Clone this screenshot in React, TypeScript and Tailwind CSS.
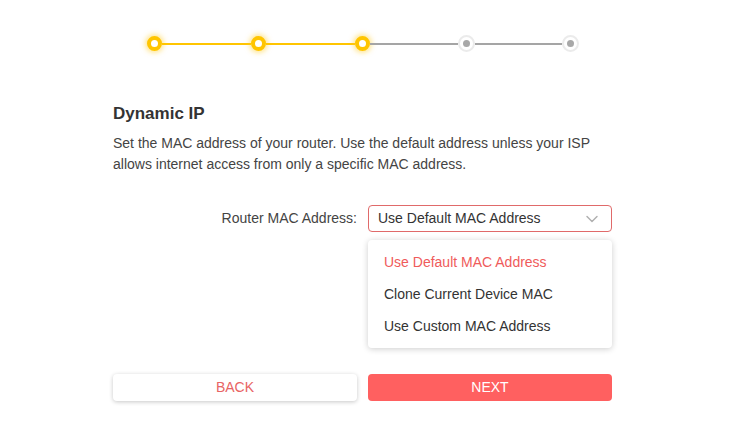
import { ChevronDown } from "lucide-react";

const steps = [true, true, true, false, false];

function StepDot({ done }: { done: boolean }) {
  if (done) {
    return (
      <div className="w-[15px] h-[15px] rounded-full border-[4px] border-[#ffc500] bg-white shadow-[0_0_5px_2px_rgba(255,205,40,0.5)] shrink-0" />
    );
  }
  return (
    <div className="w-[17px] h-[17px] rounded-full border-[2px] border-[#ebebeb] bg-white flex items-center justify-center shrink-0">
      <div className="w-[7px] h-[7px] rounded-full bg-[#a8a8a8]" />
    </div>
  );
}

function Stepper() {
  return (
    <div className="flex items-center ml-[147px] w-[432px] h-[17px]">
      {steps.map((done, i) => (
        <div key={i} className={`flex items-center ${i < steps.length - 1 ? "flex-1" : ""}`}>
          <StepDot done={done} />
          {i < steps.length - 1 && (
            <div
              className={`flex-1 h-[2px] ${steps[i + 1] ? "bg-[#ffc500]" : "bg-[#a5a5a5]"}`}
            />
          )}
        </div>
      ))}
    </div>
  );
}

export default function App() {
  const options = ["Use Default MAC Address", "Clone Current Device MAC", "Use Custom MAC Address"];
  return (
    <div
      className="w-[746px] h-[425px] bg-white text-[#333] overflow-hidden"
      style={{ fontFamily: '"Liberation Sans", Arial, sans-serif' }}
    >
      <div className="pt-[35px]">
        <Stepper />
      </div>

      <div className="ml-[113px] w-[499px] mt-[50px]">
        <h2 className="text-[17px] font-bold leading-[24px] text-[#333]">Dynamic IP</h2>
        <p className="mt-[7px] text-[14px] leading-[21px] text-[#444]">
          Set the MAC address of your router. Use the default address unless your ISP allows internet access from only a specific MAC address.
        </p>

        <div className="mt-[30px] flex items-start gap-[11px]">
          <label className="w-[244px] text-right text-[14px] leading-[26px] text-[#444]">
            Router MAC Address:
          </label>
          <div className="relative w-[244px]">
            <div className="h-[27px] rounded-[4px] border border-[#e06a6a] flex items-center justify-between pl-[9px] pr-[9px] text-[14px] text-[#333]">
              <span>Use Default MAC Address</span>
              <ChevronDown size={20} strokeWidth={1.75} className="text-[#b0b0b0]" />
            </div>
            <div className="mt-[8px] rounded-[4px] bg-white shadow-[0_1px_6px_rgba(0,0,0,0.2)] py-[6px]">
              {options.map((o, i) => (
                <div
                  key={o}
                  className={`h-[32px] flex items-center pl-[16px] text-[14px] ${i === 0 ? "text-[#ef5b5b]" : "text-[#333]"}`}
                >
                  {o}
                </div>
              ))}
            </div>
          </div>
        </div>

        <div className="mt-[26px] flex gap-[11px]">
          <button className="w-[244px] h-[27px] rounded-[4px] bg-white shadow-[0_1px_4px_rgba(0,0,0,0.22)] text-[14px] text-[#e86464]">
            BACK
          </button>
          <button className="w-[244px] h-[27px] rounded-[4px] bg-[#ff6060] text-[14px] text-white">
            NEXT
          </button>
        </div>
      </div>
    </div>
  );
}
